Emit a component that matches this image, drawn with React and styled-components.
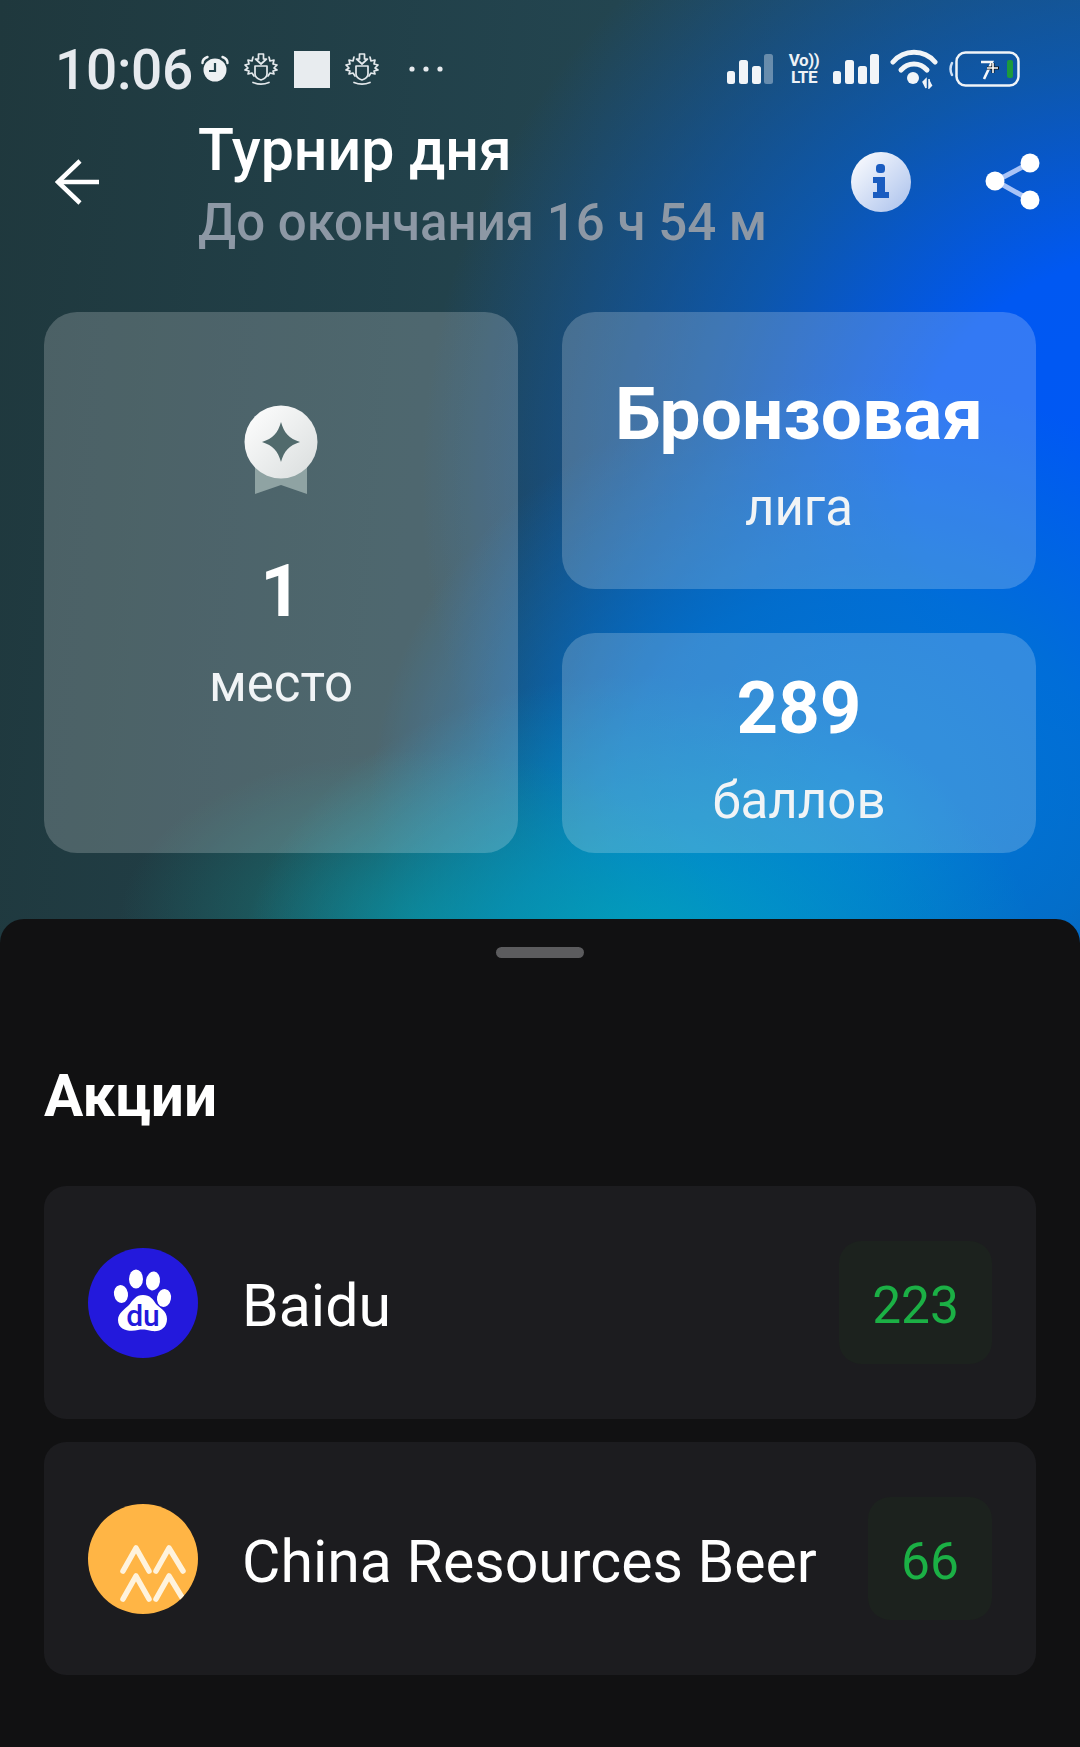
import React from "react";
import styled, { createGlobalStyle } from "styled-components";

const Global = createGlobalStyle`
  html, body { margin: 0; padding: 0; background: #111; }
  * { box-sizing: border-box; }
`;

const Page = styled.div`
  width: 1080px;
  height: 1747px;
  overflow: hidden;
  display: flex;
  flex-direction: column;
  font-family: Roboto, "Liberation Sans", sans-serif;
  color: #fff;
  background:
    radial-gradient(ellipse 400px 300px at 640px 975px, rgba(0, 170, 190, 0.9) 0%, rgba(0, 160, 200, 0.65) 40%, rgba(0, 130, 190, 0) 100%),
    radial-gradient(ellipse 300px 170px at 420px 920px, rgba(20, 125, 125, 0.85) 0%, rgba(20, 110, 110, 0) 100%),
    radial-gradient(ellipse 490px 420px at 860px 800px, rgba(0, 120, 215, 0.98) 0%, rgba(0, 115, 210, 0.8) 50%, rgba(0, 105, 200, 0) 100%),
    radial-gradient(ellipse 730px 700px at 1150px 480px, #0058f5 0%, #0058f2 32%, rgba(8, 90, 190, 0.8) 60%, rgba(20, 80, 110, 0) 100%),
    linear-gradient(95deg, #1f383d 0%, #234550 50%, #26505f 100%);
`;

const StatusBar = styled.div`
  height: 130px;
  padding: 47px 60px 0 55px;
  display: flex;
  justify-content: space-between;
  align-items: flex-start;
`;

const StatusGroup = styled.div`
  display: flex;
  align-items: center;
  height: 44px;
`;

const Time = styled.span`
  font-size: 55px;
  font-weight: 500;
  line-height: 44px;
  color: #e6eaee;
  margin-right: 8px;
  letter-spacing: -0.3px;
  position: relative;
  top: 1px;
`;

const StatusIcon = styled.svg`
  display: block;
  flex: none;
  margin-left: ${(p) => p.$gap || 0}px;
`;

const Square = styled.div`
  width: 36px;
  height: 37px;
  margin-left: 15px;
  background: #e8ecef;
`;

const VoLte = styled.div`
  width: 36px;
  margin-left: 13px;
  font-size: 17px;
  font-weight: 700;
  line-height: 17px;
  letter-spacing: -0.4px;
  text-align: center;
  white-space: nowrap;
  color: #eef2f6;
`;

const Header = styled.div`
  height: 104px;
  padding: 0 40px 0 55px;
  display: flex;
  align-items: center;
`;

const TitleBlock = styled.div`
  margin-left: 99px;
  flex: 1;
  position: relative;
  top: 4px;
`;

const Title = styled.div`
  font-size: 59px;
  font-weight: 500;
  line-height: 62px;
`;

const Subtitle = styled.div`
  margin-top: 11px;
  font-size: 51px;
  font-weight: 500;
  line-height: 62px;
  color: #8d98a5;
`;

const HeaderIcon = styled.svg`
  display: block;
  flex: none;
  margin-left: ${(p) => p.$gap || 0}px;
`;

const Cards = styled.div`
  margin-top: 78px;
  padding: 0 44px;
  display: grid;
  grid-template-columns: 474px 474px;
  grid-template-rows: 277px 220px;
  gap: 44px;
`;

const Card = styled.div`
  border-radius: 33px;
  background: rgba(255, 255, 255, 0.2);
  display: flex;
  flex-direction: column;
  align-items: center;
  justify-content: ${(p) => (p.$tall ? "flex-start" : "center")};
  padding-top: ${(p) => p.$top || 0}px;
  grid-row: ${(p) => (p.$tall ? "1 / span 2" : "auto")};
`;

const Medal = styled.svg`
  display: block;
`;

const BigValue = styled.div`
  font-size: ${(p) => p.$size || 72}px;
  font-weight: 700;
  line-height: ${(p) => p.$lh || 84}px;
  margin-top: ${(p) => p.$mt || 0}px;
`;

const CardLabel = styled.div`
  font-size: 51px;
  line-height: 56px;
  color: #f1f4f6;
  margin-top: ${(p) => p.$mt || 0}px;
`;

const Sheet = styled.div`
  margin-top: 66px;
  flex: 1;
  background: #111112;
  border-radius: 24px 24px 0 0;
  padding: 28px 44px 0;
  display: flex;
  flex-direction: column;
`;

const Handle = styled.div`
  width: 88px;
  height: 11px;
  border-radius: 6px;
  background: #5c5c5e;
  align-self: center;
`;

const SheetTitle = styled.h2`
  margin: 106px 0 0;
  font-size: 58.5px;
  font-weight: 700;
  line-height: 64px;
`;

const Rows = styled.div`
  margin-top: 58px;
  display: flex;
  flex-direction: column;
  gap: 23px;
`;

const Row = styled.div`
  height: 233px;
  border-radius: 22px;
  background: #1c1c1f;
  padding: 0 44px;
  display: flex;
  align-items: center;
`;

const Logo = styled.svg`
  display: block;
  flex: none;
`;

const RowName = styled.div`
  margin: 7px 0 0 44px;
  flex: 1;
  font-size: 59px;
  line-height: 64px;
  color: #fff;
  white-space: nowrap;
`;

const Score = styled.div`
  height: 123px;
  padding: 6px 33px 0;
  border-radius: 22px;
  background: #1c221e;
  color: #1bb045;
  font-size: 51.5px;
  display: flex;
  align-items: center;
  justify-content: center;
`;

const Crest = ({ gap }) => (
  <StatusIcon $gap={gap} width="36" height="32" viewBox="0 0 36 32" fill="none" stroke="#e4e9ec" strokeWidth="1.7" strokeLinecap="round" strokeLinejoin="round">
    <path d="M15.500 1h5v5h3l-5.500 5-5.500-5h3z" />
    <path d="M12 13h12v8c0 3-3 5-6 6-3-1-6-3-6-6z" />
    <path d="M10 4l-1 4-4-1 1 4-4 1 3 3-3 2 4 1-1 3 4-1 2 3" />
    <path d="M26 4l1 4 4-1-1 4 4 1-3 3 3 2-4 1 1 3-4-1-2 3" />
    <path d="M10 29.500c5 2 11 2 16 0" />
  </StatusIcon>
);

const Signal = ({ gap, dim }) => (
  <StatusIcon $gap={gap} width="46" height="30" viewBox="0 0 46 30">
    <rect x="0" y="17" width="8" height="13" rx="2.500" fill="#f2f5f8" />
    <rect x="12" y="6" width="9" height="24" rx="2.500" fill="#f2f5f8" />
    <rect x="25" y="12" width="9" height="18" rx="2.500" fill="#f2f5f8" />
    <rect x="37" y="0" width="9" height="30" rx="2.500" fill={dim ? "rgba(255,255,255,.35)" : "#f2f5f8"} />
  </StatusIcon>
);

function App() {
  return (
    <Page>
      <Global />
      <StatusBar>
        <StatusGroup>
          <Time>10:06</Time>
          <StatusIcon width="28" height="28" viewBox="0 0 28 28">
            <circle cx="14" cy="15" r="11.500" fill="#eef1f3" />
            <path d="M14 8v8H8" fill="none" stroke="#24434b" strokeWidth="2.200" />
            <path d="M1.500 8c0-3 2-5 5-6M26.500 8c0-3-2-5-5-6" fill="none" stroke="#eef1f3" strokeWidth="2.400" strokeLinecap="round" />
          </StatusIcon>
          <Crest gap={14} />
          <Square />
          <Crest gap={14} />
          <StatusIcon $gap={28} width="36" height="8" viewBox="0 0 36 8">
            <circle cx="4" cy="4" r="2.600" fill="#e6eaee" />
            <circle cx="18" cy="4" r="2.600" fill="#e6eaee" />
            <circle cx="32" cy="4" r="2.600" fill="#e6eaee" />
          </StatusIcon>
        </StatusGroup>
        <StatusGroup>
          <Signal dim />
          <VoLte>
            Vo))
            <br />
            LTE
          </VoLte>
          <Signal gap={11} />
          <StatusIcon $gap={11} width="48" height="40" viewBox="0 0 48 40" fill="none">
            <path d="M3 13C14 0 34 0 45 13" stroke="#f2f5f8" strokeWidth="5" strokeLinecap="round" />
            <path d="M11 21c7-8 19-8 26 0" stroke="#f2f5f8" strokeWidth="5" strokeLinecap="round" />
            <circle cx="23" cy="29" r="6" fill="#f2f5f8" />
            <path d="M33 33l3-3v9zM39 30v9l3-3" fill="#f2f5f8" stroke="#f2f5f8" strokeWidth="1.500" />
          </StatusIcon>
          <StatusIcon $gap={10} width="72" height="36" viewBox="0 0 72 36" fill="none">
            <path d="M4 12c-2 4-2 8 0 12" stroke="#cfe0f5" strokeWidth="2.500" strokeLinecap="round" />
            <rect x="8.500" y="1.500" width="62" height="33" rx="9" stroke="#f0f4f8" strokeWidth="2.500" />
            <rect x="59" y="9" width="6" height="18" rx="2" fill="#1c9a3c" />
            <path d="M33 11h11l-8 17" stroke="#f5f7fa" strokeWidth="2.600" />
            <path d="M39 17h12M45 12v10" stroke="#111" strokeWidth="3" />
            <path d="M39 17h11M45 12v10" stroke="#fff" strokeWidth="1.600" />
          </StatusIcon>
        </StatusGroup>
      </StatusBar>

      <Header>
        <HeaderIcon width="44" height="46" viewBox="0 0 44 46" fill="none" stroke="#fff" strokeWidth="4.500">
          <path d="M44 23H3" />
          <path d="M25 2L3 23l22 21" />
        </HeaderIcon>
        <TitleBlock>
          <Title>Турнир дня</Title>
          <Subtitle>До окончания 16 ч 54 м</Subtitle>
        </TitleBlock>
        <HeaderIcon width="60" height="62" viewBox="0 0 60 62">
          <defs>
            <linearGradient id="infoFill" x1="0" y1="0" x2="1" y2="1">
              <stop offset="0" stopColor="#ffffff" />
              <stop offset="1" stopColor="#a9c0ec" />
            </linearGradient>
          </defs>
          <circle cx="30" cy="31" r="30" fill="url(#infoFill)" />
          <rect x="25" y="13" width="9" height="9" rx="3.500" fill="#1a5cc0" />
          <path d="M22 26h12v15h4v6H22v-6h4v-9h-4z" fill="#1a5cc0" />
        </HeaderIcon>
        <HeaderIcon $gap={74} width="55" height="58" viewBox="0 0 55 58" fill="none">
          <path d="M11 28L45 10M11 28l34 19" stroke="#a9c4f7" strokeWidth="5" />
          <circle cx="45" cy="10" r="9.500" fill="#fff" />
          <circle cx="10" cy="28" r="9.500" fill="#fff" />
          <circle cx="45" cy="47" r="9.500" fill="#fff" />
        </HeaderIcon>
      </Header>

      <Cards>
        <Card $tall $top={93}>
          <Medal width="74" height="90" viewBox="0 0 74 90">
            <defs>
              <linearGradient id="medalFill" x1="0" y1="0" x2="1" y2="1">
                <stop offset="0" stopColor="#ffffff" />
                <stop offset="1" stopColor="#d9dddd" />
              </linearGradient>
            </defs>
            <path d="M11 50h52v39l-26-9-26 9z" fill="#8fa3a3" />
            <circle cx="37" cy="37" r="36.500" fill="url(#medalFill)" />
            <path d="M37 17c3 11 8 16.500 19 20-11 3.500-16 9-19 20-3-11-8-16.500-19-20 11-3.500 16-9 19-20z" fill="#516a6c" />
          </Medal>
          <BigValue $size={72} $lh={84} $mt={55}>1</BigValue>
          <CardLabel $mt={22}>место</CardLabel>
        </Card>
        <Card $top={9}>
          <BigValue $size={73} $lh={78}>Бронзовая</BigValue>
          <CardLabel $mt={27}>лига</CardLabel>
        </Card>
        <Card $top={12}>
          <BigValue $size={72.5} $lh={78}>289</BigValue>
          <CardLabel $mt={25}>баллов</CardLabel>
        </Card>
      </Cards>

      <Sheet>
        <Handle />
        <SheetTitle>Акции</SheetTitle>
        <Rows>
          <Row>
            <Logo width="110" height="110" viewBox="0 0 110 110">
              <circle cx="55" cy="55" r="55" fill="#2319dc" />
              <ellipse cx="33" cy="46" rx="7" ry="9" fill="#fff" transform="rotate(-10 33 46)" />
              <ellipse cx="48" cy="31" rx="7" ry="9.500" fill="#fff" />
              <ellipse cx="65" cy="33" rx="7" ry="9.500" fill="#fff" transform="rotate(8 65 33)" />
              <ellipse cx="76" cy="50" rx="7" ry="9" fill="#fff" transform="rotate(10 76 50)" />
              <path d="M55 47c7 0 10 4 13 9 4 4 11 7 11 15 0 9-7 13-15 12-5-1-9-2-14-1-7 2-20 1-20-10 0-7 7-11 11-15 4-5 7-10 14-10z" fill="#fff" />
              <text x="55" y="78" textAnchor="middle" fontFamily="Roboto, sans-serif" fontWeight="500" fontSize="30" fill="#2319dc">du</text>
            </Logo>
            <RowName>Baidu</RowName>
            <Score>223</Score>
          </Row>
          <Row>
            <Logo width="110" height="110" viewBox="0 0 110 110">
              <clipPath id="beerClip">
                <circle cx="55" cy="55" r="55" />
              </clipPath>
              <circle cx="55" cy="55" r="55" fill="#ffb545" />
              <g clipPath="url(#beerClip)" fill="none" stroke="#fff3dd" strokeWidth="5.500" strokeLinecap="round" strokeLinejoin="round">
                <path d="M35 67l13-23 13 23" />
                <path d="M68 67l13-23 14 23" />
                <path d="M35 95l13-23 13 23" />
                <path d="M68 95l13-23 14 23" />
              </g>
            </Logo>
            <RowName>China Resources Beer</RowName>
            <Score>66</Score>
          </Row>
        </Rows>
      </Sheet>
    </Page>
  );
}

export default App;
